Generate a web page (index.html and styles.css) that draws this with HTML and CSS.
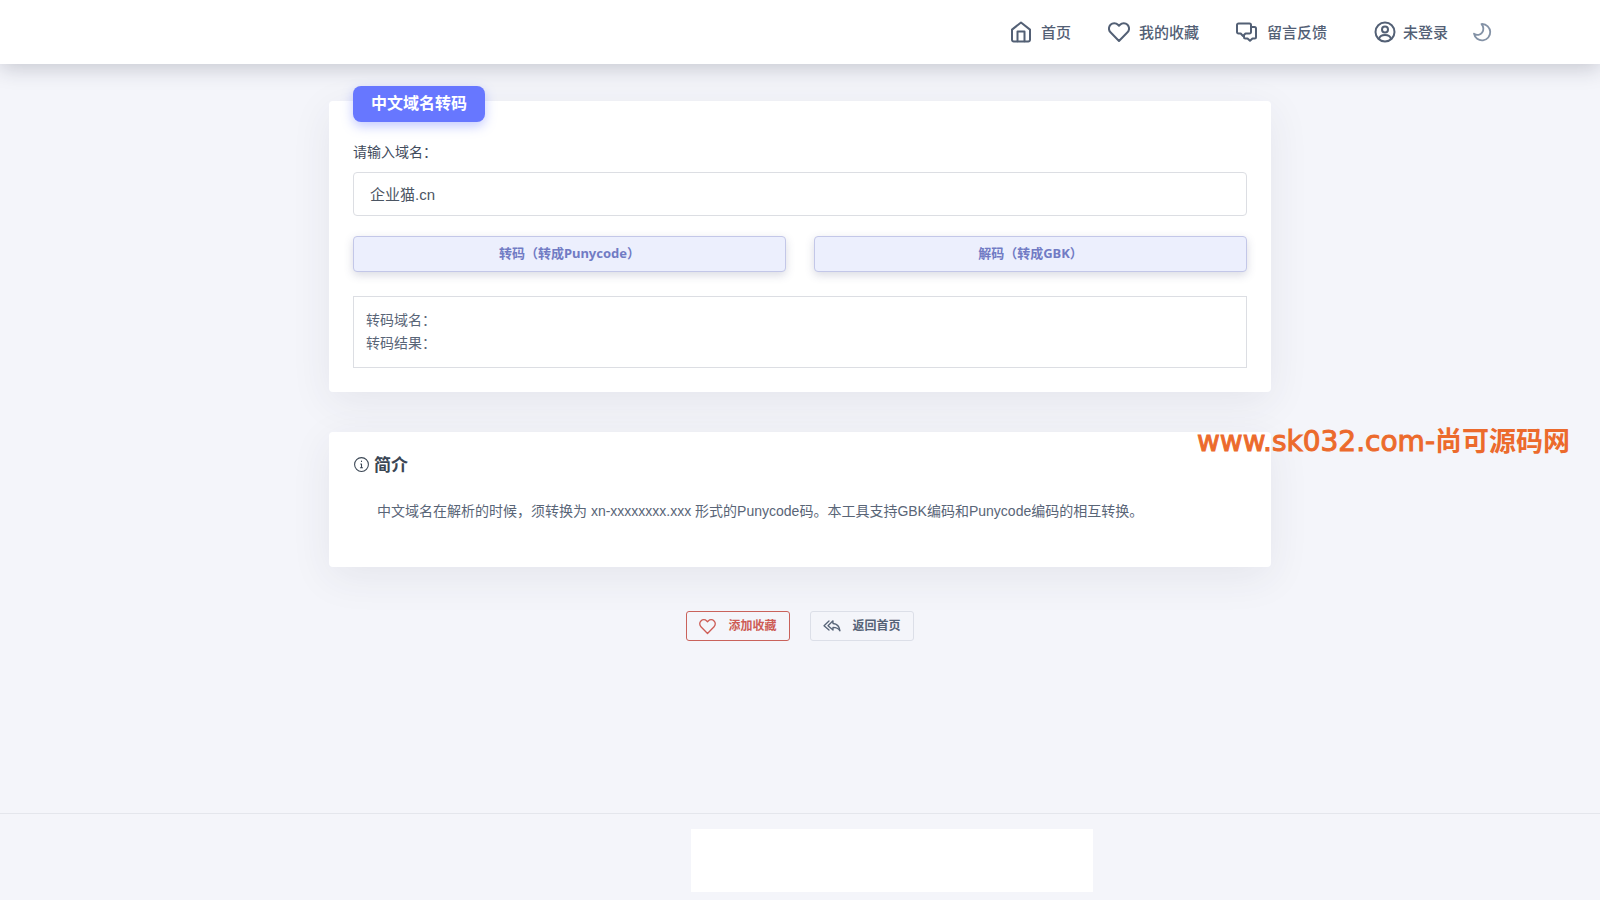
FILE: index.html
```html
<!DOCTYPE html>
<html lang="zh-CN">
<head>
<meta charset="utf-8">
<meta name="viewport" content="width=device-width, initial-scale=1">
<title>中文域名转码</title>
<link rel="stylesheet" href="styles.css">
</head>
<body>
<header class="topbar">
  <nav class="nav">
    <a class="nav-link" href="#">
      <svg class="icon" viewBox="0 0 22 22"><path d="M2 8.600 11 1.500l9 7.100v10.200a1.700 1.700 0 0 1-1.700 1.700H3.700A1.700 1.700 0 0 1 2 18.800z"/><path d="M7.500 20.300V10.500h7v9.800"/></svg>
      首页</a>
    <a class="nav-link" href="#">
      <svg class="icon" viewBox="0 0 22 22"><path d="M11 20 2.500 11.300a5.300 5.300 0 0 1 0-7.500 5.200 5.200 0 0 1 7.500 0l1 1 1-1a5.200 5.200 0 0 1 7.500 0 5.300 5.300 0 0 1 0 7.500z"/></svg>
      我的收藏</a>
    <a class="nav-link" href="#">
      <svg class="icon" viewBox="0 0 22 22"><path d="M2.500 2.500h11a1.500 1.500 0 0 1 1.500 1.500v7a1.500 1.500 0 0 1-1.500 1.500H9.500L7 15l-2.300-2.500H2.500A1.500 1.500 0 0 1 1 11V4a1.500 1.500 0 0 1 1.500-1.500z"/><path d="M15 6h3.500A1.500 1.500 0 0 1 20 7.500v8.500a1.500 1.500 0 0 1-1.500 1.500h-2L14 19.800l-2.500-2.300H9.500A1.500 1.500 0 0 1 8 16v-1.500"/></svg>
      留言反馈</a>
  </nav>
  <a class="account" href="#">
    <svg class="icon" viewBox="0 0 22 22"><circle cx="11" cy="11" r="9.500"/><circle cx="11" cy="8.500" r="3"/><path d="M5 18c.6-2.900 2.900-4 6-4s5.400 1.100 6 4"/></svg>
    未登录</a>
  <button class="theme" type="button" aria-label="切换主题">
    <svg class="icon icon-moon" viewBox="0 0 22 22"><path d="M11.200 2.200a9 9 0 1 1-9 10.600c3.300 2.400 7.200 1.500 9-1.300 1.700-2.600 1.800-6-.7-9.200z"/></svg>
  </button>
</header>

<main class="page">
  <section class="card tool">
    <h1 class="badge">中文域名转码</h1>
    <label class="label" for="domain">请输入域名：</label>
    <input class="field" id="domain" type="text" value="企业猫.cn">
    <div class="actions">
      <button class="convert" type="button">转码（转成Punycode）</button>
      <button class="convert" type="button">解码（转成GBK）</button>
    </div>
    <div class="result">
      <div>转码域名：</div>
      <div>转码结果：</div>
    </div>
  </section>

  <section class="card intro">
    <h2 class="intro-title">
      <svg class="icon icon-info" viewBox="0 0 16 16"><circle cx="8" cy="8" r="6.500"/><path d="M7.300 7.500H8v3.500M7 11h2M8 4.700v.5"/></svg>
      简介</h2>
    <p class="intro-text">中文域名在解析的时候，须转换为 xn-xxxxxxxx.xxx 形式的Punycode码。本工具支持GBK编码和Punycode编码的相互转换。</p>
  </section>

  <div class="links">
    <button class="small favorite" type="button">
      <svg class="icon icon-small" viewBox="0 0 22 22"><path d="M11 20 2.500 11.300a5.300 5.300 0 0 1 0-7.500 5.200 5.200 0 0 1 7.500 0l1 1 1-1a5.200 5.200 0 0 1 7.500 0 5.300 5.300 0 0 1 0 7.500z"/></svg>
      添加收藏</button>
    <a class="small back" href="#">
      <svg class="icon icon-small" viewBox="0 0 18 18"><path d="M6 4 1 8.700l5 4.300M10 3.800 5 8.700l5 4.300v-2.700c3.500 0 5.500 1 7 3.500-.5-4-3-7-7-7.300z"/></svg>
      返回首页</a>
  </div>
</main>

<footer class="footer"><div class="footer-box"></div></footer>
<div class="watermark">www.sk032.com-<span class="watermark-name">尚可源码网</span></div>
</body>
</html>
```

FILE: styles.css
```css
* { box-sizing: border-box; }

body {
  margin: 0;
  min-height: 100vh;
  display: flex;
  flex-direction: column;
  position: relative;
  background: #f4f5fa;
  color: #596577;
  font: 14px/23px "Liberation Sans", "Noto Sans CJK SC", sans-serif;
}

a { color: inherit; text-decoration: none; }
button { font-family: inherit; cursor: pointer; }

.icon {
  width: 22px;
  height: 22px;
  flex: none;
  fill: none;
  stroke: currentColor;
  stroke-width: 2;
  stroke-linejoin: round;
  stroke-linecap: round;
}

.topbar {
  height: 64px;
  padding-right: 108px;
  display: flex;
  align-items: center;
  justify-content: flex-end;
  background: #fff;
  box-shadow: 0 4px 20px rgba(30, 35, 60, 0.22);
  color: #536075;
  font-size: 15px;
  font-weight: 500;
}
.nav { display: flex; gap: 37px; margin-right: 47px; }
.nav-link { display: flex; align-items: center; gap: 9px; }
.account { display: flex; align-items: center; gap: 7px; margin-right: 24px; }
.theme { display: flex; padding: 0; border: 0; background: none; color: #8492a6; }
.icon-moon { width: 20px; height: 20px; }

.page {
  flex: 1;
  width: 100%;
  max-width: 942px;
  margin: 0 auto;
  padding-top: 37px;
}
.card {
  padding: 0 24px;
  border-radius: 4px;
  background: #fff;
  box-shadow: 0 10px 40px rgba(50, 55, 80, 0.08);
}
.tool {
  display: flex;
  flex-direction: column;
  align-items: stretch;
  padding-bottom: 24px;
}
.badge {
  align-self: flex-start;
  margin: -15px 0 19px;
  padding: 6px 18px;
  border-radius: 8px;
  background: #6777ff;
  box-shadow: 0 4px 12px rgba(103, 119, 255, 0.4);
  color: #fff;
  font-size: 16px;
  line-height: 24px;
  font-weight: 700;
}
.label { margin-bottom: 8px; color: #414b5c; }
.field {
  width: 100%;
  height: 44px;
  padding: 0 16px 2px;
  border: 1px solid #dcdee3;
  border-radius: 4px;
  background: #fff;
  color: #4b5563;
  font: inherit;
  font-size: 15px;
}
.actions {
  display: grid;
  grid-template-columns: 1fr 1fr;
  gap: 28px;
  margin: 20px 0 24px;
}
.convert {
  height: 36px;
  padding: 0 0 2px;
  border: 1px solid #c3c7e8;
  border-radius: 4px;
  background: #eceffd;
  box-shadow: 0 3px 10px rgba(60, 65, 110, 0.2);
  color: #717bc4;
  font: 700 13px/20px "Noto Sans", "Noto Sans CJK SC", sans-serif;
}
.result { padding: 12px; border: 1px solid #dcdee3; }

.intro { margin-top: 40px; padding-top: 21px; padding-bottom: 44px; }
.intro-title {
  display: flex;
  align-items: center;
  gap: 4px;
  margin: 0 0 21px;
  color: #3a4654;
  font-size: 17px;
  line-height: 26px;
  font-weight: 700;
}
.icon-info { width: 17px; height: 17px; margin-bottom: 4px; stroke-width: 1; }
.intro-text { margin: 0 24px; }

.links { display: flex; justify-content: center; gap: 20px; margin: 44px 0; }
.small {
  display: flex;
  align-items: center;
  gap: 12px;
  height: 30px;
  padding: 0 12px;
  border: 1px solid #dcdfe8;
  border-radius: 3px;
  background: none;
  color: #566377;
  font-size: 12px;
  line-height: 18px;
  font-weight: 700;
}
.favorite { border-color: #c9625b; color: #cd5c55; }
.icon-small { width: 18px; height: 18px; stroke-width: 1.3; }
.favorite .icon-small { width: 17px; height: 17px; stroke-width: 1.7; }

.footer {
  display: flex;
  justify-content: center;
  padding: 15px 0 8px 184px;
  border-top: 1px solid #e4e6ec;
}
.footer-box { width: 402px; height: 63px; background: #fff; }

.watermark {
  position: absolute;
  top: 420px;
  right: 30px;
  color: #ec6a2c;
  font: 28px/40px "DejaVu Sans", "Noto Sans CJK SC", sans-serif;
  -webkit-text-stroke: 1px #ec6a2c;
  white-space: nowrap;
}
.watermark-name { font: 700 27px/40px "Noto Sans CJK SC", sans-serif; -webkit-text-stroke: 0; }
```
